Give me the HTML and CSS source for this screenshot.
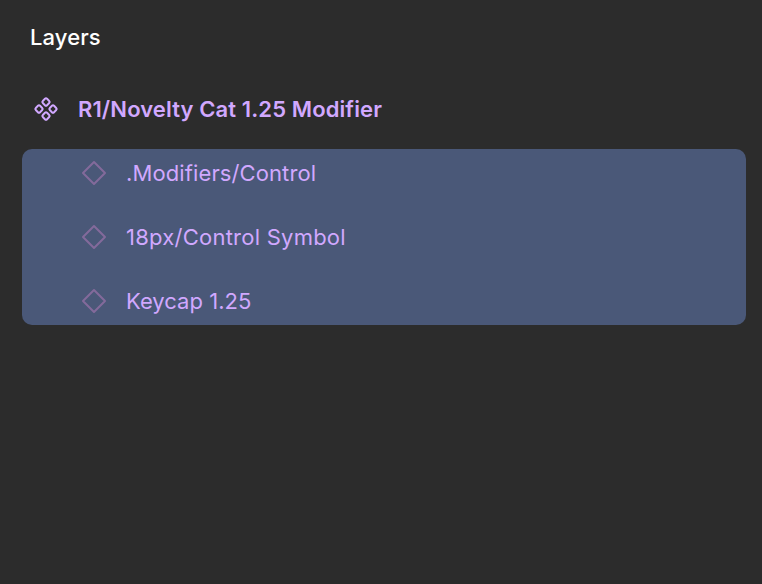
FILE: index.html
```html
<!DOCTYPE html>
<html lang="en">
<head>
<meta charset="utf-8">
<title>Layers</title>
<link rel="stylesheet" href="styles.css">
</head>
<body>
<main class="panel">
  <h1 class="title">Layers</h1>
  <div class="component">
    <svg class="component-icon" viewBox="0 0 24 24">
      <rect x="-3" y="-3" width="6" height="6" rx="1.5" transform="translate(12 5) rotate(45)"/>
      <rect x="-3" y="-3" width="6" height="6" rx="1.5" transform="translate(5 12) rotate(45)"/>
      <rect x="-3" y="-3" width="6" height="6" rx="1.5" transform="translate(19 12) rotate(45)"/>
      <rect x="-3" y="-3" width="6" height="6" rx="1.5" transform="translate(12 19) rotate(45)"/>
    </svg>
    <span class="name">R1/Novelty Cat 1.25 Modifier</span>
  </div>
  <ul class="selection">
    <li class="layer"><svg class="icon" viewBox="0 0 26 26"><path d="M13 2L24 13 13 24 2 13z"/></svg><span class="name">.Modifiers/Control</span></li>
    <li class="layer wide"><svg class="icon" viewBox="0 0 26 26"><path d="M13 2L24 13 13 24 2 13z"/></svg><span class="name">18px/Control Symbol</span></li>
    <li class="layer tight"><svg class="icon" viewBox="0 0 26 26"><path d="M13 2L24 13 13 24 2 13z"/></svg><span class="name">Keycap 1.25</span></li>
  </ul>
</main>
</body>
</html>
```
FILE: styles.css
```css
* { box-sizing: border-box; }
body { margin: 0; background: #2c2c2c; font-family: Inter, sans-serif; font-size: 22px; }
.panel { height: 584px; padding: 21px 16px 0 22px; overflow: hidden; border-bottom: 4px solid #292929; }
.title { margin: 0 0 40px; padding-left: 8px; font-size: 22px; line-height: 32px; font-weight: 500; letter-spacing: .11px; color: #fff; }
.component { display: flex; align-items: center; height: 32px; margin-bottom: 24px; padding-left: 12px; gap: 20px; color: #d1a8ff; font-weight: 600; letter-spacing: .11px; }
.component-icon { width: 24px; height: 24px; overflow: visible; fill: none; stroke: #d1a8ff; stroke-width: 2; }
.selection { display: flex; flex-direction: column; gap: 16px; height: 176px; margin: 0; padding: 0; border-radius: 10px; background: #4a5878; list-style: none; }
.layer { display: flex; align-items: center; height: 48px; padding-left: 59px; gap: 19px; color: #d1a8ff; letter-spacing: .11px; }
.layer.wide { letter-spacing: .24px; }
.layer.tight { letter-spacing: .02px; }
.icon { width: 26px; height: 26px; fill: none; stroke: #836a9b; stroke-width: 2; stroke-linejoin: round; }
```
